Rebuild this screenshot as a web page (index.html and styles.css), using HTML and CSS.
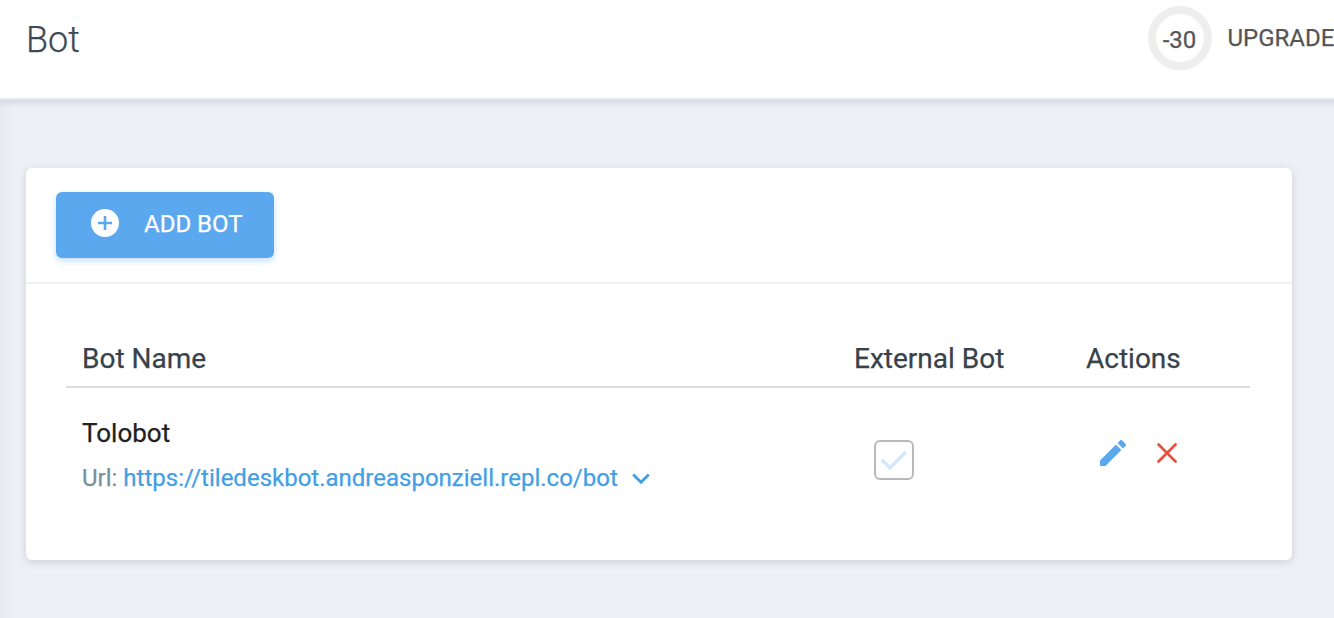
FILE: index.html
```html
<!DOCTYPE html>
<html lang="en">
<head>
<meta charset="utf-8">
<title>Bot</title>
<link rel="stylesheet" href="styles.css">
</head>
<body>
<header class="topbar">
  <h1 class="page-title">Bot</h1>
  <div class="plan">
    <span class="days-ring">-30</span>
    <span class="upgrade">UPGRADE</span>
  </div>
</header>
<main class="content">
  <section class="card">
    <div class="card-toolbar">
      <button class="add-button" type="button">
        <svg class="add-icon" viewBox="0 0 28 28" aria-hidden="true"><circle cx="14" cy="14" r="14" fill="#fff"/><path d="M14 7v14M7 14h14" stroke="#5ba8ef" stroke-width="2.6"/></svg>
        <span class="add-label">ADD BOT</span>
      </button>
    </div>
    <div class="table">
      <div class="row head">
        <div>Bot Name</div>
        <div>External Bot</div>
        <div>Actions</div>
      </div>
      <div class="row body">
        <div class="bot">
          <div class="bot-name">Tolobot</div>
          <div class="bot-url">
            <span class="url-label">Url:</span>
            <a class="url-link">https://tiledeskbot.andreasponziell.repl.co/bot</a>
            <svg class="chevron" viewBox="0 0 18 12" aria-hidden="true"><path d="M1.2 1.5 9 9.3 16.8 1.5" fill="none" stroke="#429fe3" stroke-width="2.8"/></svg>
          </div>
        </div>
        <div class="external">
          <span class="checkbox"><svg class="check" viewBox="0 0 36 36" aria-hidden="true"><path d="M5.700 17.800 14 26 29.700 10" fill="none" stroke="#d5e8fb" stroke-width="3.700"/></svg></span>
        </div>
        <div class="actions">
          <svg class="edit" viewBox="3 3 18 18" aria-hidden="true"><path fill="#5ba8ef" d="M3 17.25V21h3.75L17.81 9.940l-3.750-3.750L3 17.250zM20.710 7.040c.39-.39.39-1.020 0-1.410l-2.340-2.340c-.39-.39-1.020-.39-1.410 0l-1.830 1.830 3.750 3.750 1.830-1.830z"/></svg>
          <svg class="remove" viewBox="0 0 20 20" aria-hidden="true"><path d="M1.500 1.500 18.500 18.500M18.500 1.500 1.500 18.500" stroke="#e5503f" stroke-width="2.700" stroke-linecap="round"/></svg>
        </div>
      </div>
    </div>
  </section>
</main>
</body>
</html>
```
FILE: styles.css
```css
* { box-sizing: border-box; }

body {
  margin: 0;
  height: 618px;
  overflow: hidden;
  display: flex;
  flex-direction: column;
  background: #eff0f5;
  font-family: Roboto, "Liberation Sans", sans-serif;
  -webkit-text-stroke: .25px;
}

.topbar {
  height: 100px;
  flex: none;
  padding: 6px 0 0 26px;
  display: flex;
  justify-content: space-between;
  align-items: flex-start;
  background: #fff;
  border-bottom: 2px solid #e8e8ef;
}

.page-title {
  margin: 12px 0 0;
  font-size: 36px;
  line-height: 44px;
  font-weight: 300;
  color: #3d4858;
}

.plan {
  width: 186px;
  flex: none;
  display: flex;
  gap: 15.5px;
  color: #555;
  font-size: 24px;
  line-height: 64px;
  white-space: nowrap;
}

.days-ring {
  width: 64px;
  height: 64px;
  flex: none;
  padding: 2px 1px 0 0;
  border: 8px solid #eee;
  border-radius: 50%;
  line-height: 48px;
  text-align: center;
}

.content {
  flex: 1;
  padding: 68px 42px 58px 26px;
  background: linear-gradient(#d8d9e3, rgba(239, 240, 245, 0) 8px),
    linear-gradient(90deg, #e9eaef, #eff0f5 16px);
}

.card {
  height: 392px;
  background: #fff;
  border-radius: 6px;
  box-shadow: 0 2px 8px rgba(0, 0, 0, .14);
}

.card-toolbar {
  height: 116px;
  padding: 24px 30px;
  border-bottom: 2px solid #f0f1f5;
}

.add-button {
  width: 218px;
  height: 66px;
  padding: 0 0 3px 35px;
  display: flex;
  align-items: center;
  gap: 25px;
  border: 0;
  border-radius: 6px;
  background: #5ba8ef;
  box-shadow: 0 3px 6px rgba(91, 168, 239, .35);
  color: #fff;
  font: 400 24px/28px Roboto, "Liberation Sans", sans-serif;
  -webkit-text-stroke: .25px;
}

.add-icon { width: 28px; height: 28px; flex: none; margin-bottom: 1px; }
.add-label { white-space: nowrap; }

.table { padding: 44px 42px 0 40px; }

.row {
  display: grid;
  grid-template-columns: 772px 232px 1fr;
  padding-left: 16px;
}

.head {
  height: 60px;
  border-bottom: 2px solid #ddd;
  color: #37424a;
  font-size: 28px;
  line-height: 62px;
}

.bot { padding-top: 27px; }

.bot-name {
  color: #212121;
  font-size: 26px;
  line-height: 36px;
}

.bot-url {
  height: 36px;
  margin-top: 9px;
  display: flex;
  align-items: center;
  gap: 6px;
  font-size: 24px;
  line-height: 36px;
  white-space: nowrap;
}

.url-label { color: #78909c; }
.url-link { color: #429fe3; }
.chevron { width: 18px; height: 12px; margin: 1px 0 0 8px; }

.external { padding: 52px 0 0 20px; }

.checkbox {
  width: 40px;
  height: 40px;
  display: block;
  border: 2px solid #b9b9b9;
  border-radius: 6px;
}

.check { display: block; width: 36px; height: 36px; }

.actions {
  padding: 52px 0 0 14px;
  display: flex;
  align-items: flex-start;
  gap: 31px;
}

.edit { width: 26px; height: 26px; }
.remove { width: 20px; height: 20px; margin-top: 3px; }
```
